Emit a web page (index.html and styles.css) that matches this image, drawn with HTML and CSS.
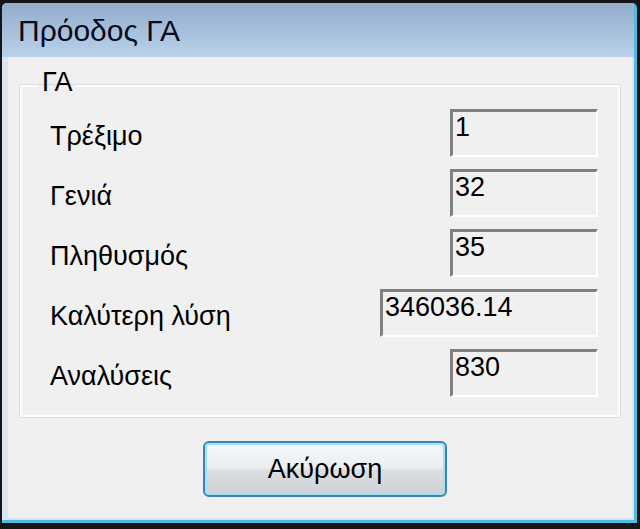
FILE: index.html
```html
<!DOCTYPE html>
<html lang="el">
<head>
<meta charset="utf-8">
<title>Πρόοδος ΓΑ</title>
<link rel="stylesheet" href="styles.css">
</head>
<body>
<div class="win">
  <div class="inner">
    <div class="title">Πρόοδος ΓΑ</div>
    <div class="client">
      <fieldset class="group">
        <legend class="legend">ΓΑ</legend>
        <div class="row">
          <span class="label">Τρέξιμο</span>
          <span class="box">1</span>
        </div>
        <div class="row">
          <span class="label">Γενιά</span>
          <span class="box">32</span>
        </div>
        <div class="row">
          <span class="label">Πληθυσμός</span>
          <span class="box">35</span>
        </div>
        <div class="row">
          <span class="label">Καλύτερη λύση</span>
          <span class="box wide">346036.14</span>
        </div>
        <div class="row">
          <span class="label">Αναλύσεις</span>
          <span class="box">830</span>
        </div>
      </fieldset>
      <div class="actions">
        <button class="btn" type="button">Ακύρωση</button>
      </div>
    </div>
  </div>
</div>
</body>
</html>
```
FILE: styles.css
```css
html, body {
  margin: 0;
  padding: 0;
}
body {
  width: 640px;
  height: 529px;
  overflow: hidden;
  background: #161616;
  font-family: "Liberation Sans", Arial, sans-serif;
  color: #000;
}
.win {
  box-sizing: border-box;
  height: 529px;
  padding: 3px 3px 6px 2px;
  display: flex;
  flex-direction: column;
}
.inner {
  flex: 1;
  display: flex;
  flex-direction: column;
  background: #dae5f1;
  border-right: 3px solid #4fbbe4;
  border-bottom: 3px solid #4fbbe4;
  border-top-left-radius: 5px;
  border-top-right-radius: 5px;
  overflow: hidden;
}
.title {
  height: 53px;
  padding: 1px 0 0 16px;
  line-height: 53px;
  font-size: 30px;
  color: #0a0a1e;
  background: linear-gradient(#93adca, #a9c3df 60%, #b9d1ea);
}
.client {
  flex: 1;
  margin: 0 2px 2px 6px;
  background: #f0f0f0;
  display: flex;
  flex-direction: column;
}
.group {
  margin: 10px 12px 0 12px;
  padding: 5px 20px 18px 16px;
  border: 2px solid #fff;
  border-radius: 3px;
  box-shadow: 0 0 0 1px #d5dce2;
  display: flex;
  flex-direction: column;
  gap: 12px;
  min-width: 0;
}
.legend {
  padding: 0 4px 6px 4px;
  font-size: 27px;
  line-height: 31px;
}
.row {
  display: flex;
  justify-content: space-between;
  align-items: flex-start;
}
.label {
  margin-left: 12px;
  padding-top: 12px;
  font-size: 27px;
  line-height: 31px;
}
.box {
  box-sizing: border-box;
  width: 148px;
  height: 48px;
  padding: 0 0 0 2px;
  font-size: 27px;
  line-height: 31px;
  background: #f0f0f0;
  border-top: 3px solid #808080;
  border-left: 3px solid #808080;
  border-right: 2px solid #fff;
  border-bottom: 2px solid #fff;
}
.box.wide {
  width: 218px;
}
.actions {
  display: flex;
  justify-content: center;
  padding-left: 10px;
  margin-top: 24px;
}
.btn {
  box-sizing: border-box;
  width: 244px;
  height: 56px;
  padding: 0;
  font-family: "Liberation Sans", Arial, sans-serif;
  font-size: 27px;
  color: #000;
  border: 2px solid #3c84b8;
  border-radius: 6px;
  box-shadow: inset 0 0 0 2px #9fe2f8;
  background: linear-gradient(#f4f8fa, #ebeef0 48%, #dcdfe2 52%, #cdd1d5);
}
```
